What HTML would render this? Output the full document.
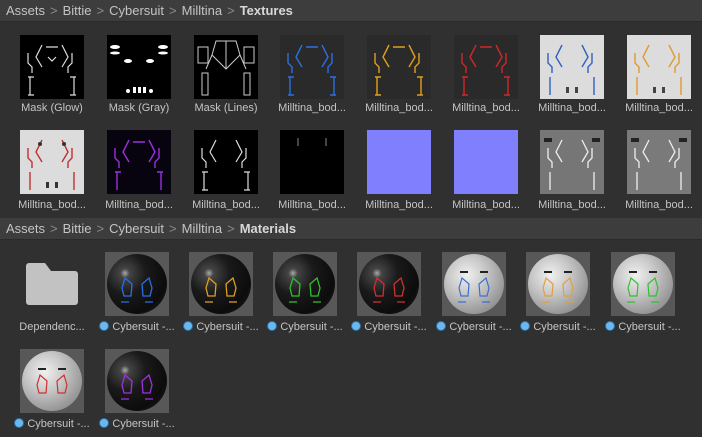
<!DOCTYPE html>
<html><head><style>
body{margin:0;width:702px;height:437px;background:#303030;font-family:"Liberation Sans",sans-serif;overflow:hidden;position:relative}
.hdr{position:absolute;left:0;width:702px;height:22px;background:#3d3d3d;color:#c4c4c4;font-size:13px;line-height:22px;padding-left:6px;box-sizing:border-box;border-bottom:1px solid #2a2a2a}
.hdr b{color:#d8d8d8}
.hdr .s{color:#8a8a8a;margin:0 5px}
.t{position:absolute;width:64px;height:64px}
.t svg{width:64px;height:64px;display:block}
.l{position:absolute;width:90px;text-align:center;font-size:11px;color:#c4c4c4;white-space:nowrap}
.box{position:absolute;width:64px;height:64px;background:#585858}
.sph{position:absolute;left:2px;top:2px;width:60px;height:60px;border-radius:50%}
.sph svg{position:absolute;left:0;top:0;width:60px;height:60px}
.dk{background:radial-gradient(circle at 30% 32%,#aaa 0,#444 8%,#1a1a1a 35%,#0c0c0c 70%,#222 100%)}
.lt{background:radial-gradient(circle at 38% 35%,#f0f0f0 0,#c8c8c8 35%,#9a9a9a 70%,#777 100%)}
.ic{display:inline-block;width:8px;height:8px;border-radius:50%;background:#6ab8ee;border:1px solid #2c6fa6;vertical-align:-1px;margin-right:3px}
.ml{position:absolute;width:84px;text-align:center;font-size:11px;color:#c4c4c4;white-space:nowrap}
</style></head><body>
<div class="hdr" style="top:0">Assets<span class="s">&gt;</span>Bittie<span class="s">&gt;</span>Cybersuit<span class="s">&gt;</span>Milltina<span class="s">&gt;</span><b>Textures</b></div>
<div class="hdr" style="top:218px">Assets<span class="s">&gt;</span>Bittie<span class="s">&gt;</span>Cybersuit<span class="s">&gt;</span>Milltina<span class="s">&gt;</span><b>Materials</b></div>

<div class="t" style="left:20px;top:35px"><svg viewBox="0 0 64 64"><rect width="64" height="64" fill="#000"/><g stroke="#ddd" stroke-width="1.2" fill="none"><path d="M8 18v10l4 4v6M52 18v10l-4 4v6M22 10l-6 12 6 10M42 10l6 12-6 10M26 12h12M28 22l4 4 4-4M10 42v18M54 42v18M8 42h6M50 42h6M8 60h6M50 60h6"/></g></svg></div>
<div class="t" style="left:107px;top:35px"><svg viewBox="0 0 64 64"><rect width="64" height="64" fill="#000"/><g fill="#fff"><ellipse cx="8" cy="12" rx="5" ry="2"/><ellipse cx="56" cy="12" rx="5" ry="2"/><ellipse cx="8" cy="18" rx="5" ry="1.5"/><ellipse cx="56" cy="18" rx="5" ry="1.5"/><ellipse cx="21" cy="26" rx="4" ry="2"/><ellipse cx="43" cy="26" rx="4" ry="2"/><rect x="26" y="52" width="3" height="6"/><rect x="31" y="52" width="3" height="6"/><rect x="36" y="52" width="3" height="6"/><circle cx="21" cy="56" r="2"/><circle cx="44" cy="56" r="2"/></g></svg></div>
<div class="t" style="left:194px;top:35px"><svg viewBox="0 0 64 64"><rect width="64" height="64" fill="#000"/><g stroke="#ccc" stroke-width="1" fill="none"><path d="M4 12h10v16H4zM50 12h10v16H50zM22 6l-4 14 14 14 14-14-4-14zM32 6v28M18 20l-6 14M46 20l6 14M8 38v22h6V38zM50 38v22h6V38z"/></g></svg></div>
<div class="t" style="left:280px;top:35px"><svg viewBox="0 0 64 64"><rect width="64" height="64" fill="#2a2a2a"/><g stroke="#2c6ee0" stroke-width="1.4" fill="none"><path d="M8 18v10l4 4v6M52 18v10l-4 4v6M22 10l-6 12 6 10M42 10l6 12-6 10M26 12h12M10 42v18M54 42v18M8 42h6M50 42h6M8 60h6M50 60h6"/></g></svg></div>
<div class="t" style="left:367px;top:35px"><svg viewBox="0 0 64 64"><rect width="64" height="64" fill="#2a2a2a"/><g stroke="#e0a020" stroke-width="1.4" fill="none"><path d="M8 18v10l4 4v6M52 18v10l-4 4v6M22 10l-6 12 6 10M42 10l6 12-6 10M26 12h12M10 42v18M54 42v18M8 42h6M50 42h6M8 60h6M50 60h6"/></g></svg></div>
<div class="t" style="left:454px;top:35px"><svg viewBox="0 0 64 64"><rect width="64" height="64" fill="#2a2a2a"/><g stroke="#d02828" stroke-width="1.4" fill="none"><path d="M8 18v10l4 4v6M52 18v10l-4 4v6M22 10l-6 12 6 10M42 10l6 12-6 10M26 12h12M10 42v18M54 42v18M8 42h6M50 42h6M8 60h6M50 60h6"/></g></svg></div>
<div class="t" style="left:540px;top:35px"><svg viewBox="0 0 64 64"><rect width="64" height="64" fill="#dcdcdc"/><g stroke="#3060c0" stroke-width="1.4" fill="none"><path d="M8 18v10l4 4v6M52 18v10l-4 4v6M22 10l-6 12 6 10M42 10l6 12-6 10M10 42v18M54 42v18"/></g><g fill="#444"><rect x="26" y="52" width="3" height="6"/><rect x="35" y="52" width="3" height="6"/></g></svg></div>
<div class="t" style="left:627px;top:35px"><svg viewBox="0 0 64 64"><rect width="64" height="64" fill="#dcdcdc"/><g stroke="#e09a30" stroke-width="1.4" fill="none"><path d="M8 18v10l4 4v6M52 18v10l-4 4v6M22 10l-6 12 6 10M42 10l6 12-6 10M10 42v18M54 42v18"/></g><g fill="#444"><rect x="26" y="52" width="3" height="6"/><rect x="35" y="52" width="3" height="6"/></g></svg></div>
<div class="l" style="left:7px;top:102px">Mask (Glow)</div>
<div class="l" style="left:94px;top:102px">Mask (Gray)</div>
<div class="l" style="left:181px;top:102px">Mask (Lines)</div>
<div class="l" style="left:267px;top:102px">Milltina_bod...</div>
<div class="l" style="left:354px;top:102px">Milltina_bod...</div>
<div class="l" style="left:441px;top:102px">Milltina_bod...</div>
<div class="l" style="left:527px;top:102px">Milltina_bod...</div>
<div class="l" style="left:614px;top:102px">Milltina_bod...</div>

<div class="t" style="left:20px;top:130px"><svg viewBox="0 0 64 64"><rect width="64" height="64" fill="#dcdcdc"/><g stroke="#c03030" stroke-width="1.4" fill="none"><path d="M8 18v10l4 4v6M52 18v10l-4 4v6M22 10l-6 12 6 10M42 10l6 12-6 10M10 42v18M54 42v18"/></g><g fill="#333"><rect x="26" y="52" width="3" height="6"/><rect x="35" y="52" width="3" height="6"/><circle cx="20" cy="14" r="2"/><circle cx="44" cy="14" r="2"/></g></svg></div>
<div class="t" style="left:107px;top:130px"><svg viewBox="0 0 64 64"><rect width="64" height="64" fill="#08040f"/><g stroke="#9a30e0" stroke-width="1.4" fill="none"><path d="M8 18v10l4 4v6M52 18v10l-4 4v6M22 10l-6 12 6 10M42 10l6 12-6 10M26 12h12M10 42v18M54 42v18M8 42h6M50 42h6"/></g></svg></div>
<div class="t" style="left:194px;top:130px"><svg viewBox="0 0 64 64"><rect width="64" height="64" fill="#000"/><g stroke="#ddd" stroke-width="1.2" fill="none"><path d="M8 18v10l4 4v6M52 18v10l-4 4v6M22 10l-6 12 6 10M42 10l6 12-6 10M10 42v18M54 42v18M8 42h6M50 42h6M8 60h6M50 60h6"/></g></svg></div>
<div class="t" style="left:280px;top:130px"><svg viewBox="0 0 64 64"><rect width="64" height="64" fill="#000"/><path d="M18 8v8M46 8v8" stroke="#888" stroke-width="1"/></svg></div>
<div class="t" style="left:367px;top:130px;background:#8080fe"></div>
<div class="t" style="left:454px;top:130px;background:#8080fe"></div>
<div class="t" style="left:540px;top:130px"><svg viewBox="0 0 64 64"><rect width="64" height="64" fill="#767676"/><g stroke="#eee" stroke-width="1.3" fill="none"><path d="M8 18v10l4 4v6M52 18v10l-4 4v6M22 10l-6 12 6 10M42 10l6 12-6 10M10 42v18M54 42v18"/></g><g fill="#222"><rect x="4" y="8" width="8" height="4"/><rect x="52" y="8" width="8" height="4"/></g></svg></div>
<div class="t" style="left:627px;top:130px"><svg viewBox="0 0 64 64"><rect width="64" height="64" fill="#7a7a7a"/><g stroke="#eee" stroke-width="1.3" fill="none"><path d="M8 18v10l4 4v6M52 18v10l-4 4v6M22 10l-6 12 6 10M42 10l6 12-6 10M10 42v18M54 42v18"/></g><g fill="#222"><rect x="4" y="8" width="8" height="4"/><rect x="52" y="8" width="8" height="4"/></g></svg></div>
<div class="l" style="left:7px;top:199px">Milltina_bod...</div>
<div class="l" style="left:94px;top:199px">Milltina_bod...</div>
<div class="l" style="left:181px;top:199px">Milltina_bod...</div>
<div class="l" style="left:267px;top:199px">Milltina_bod...</div>
<div class="l" style="left:354px;top:199px">Milltina_bod...</div>
<div class="l" style="left:441px;top:199px">Milltina_bod...</div>
<div class="l" style="left:527px;top:199px">Milltina_bod...</div>
<div class="l" style="left:614px;top:199px">Milltina_bod...</div>

<svg style="position:absolute;left:26px;top:263px" width="52" height="42" viewBox="0 0 52 42"><path d="M3 0h16l6 8h24a3 3 0 0 1 3 3v28a3 3 0 0 1-3 3H3a3 3 0 0 1-3-3V3a3 3 0 0 1 3-3z" fill="#c2c2c2"/></svg>
<div class="ml" style="left:10px;top:321px">Dependenc...</div>

<div class="box" style="left:105px;top:252px"><div class="sph dk"><svg viewBox="0 0 60 60" fill="none" stroke="#2a6ee8" stroke-width="1.3"><path d="M18 24l-3 10 2 8h7l1-12zM42 24l3 10-2 8h-7l-1-12zM14 48h8M38 48h8"/></svg></div></div>
<div class="box" style="left:189px;top:252px"><div class="sph dk"><svg viewBox="0 0 60 60" fill="none" stroke="#e0a020" stroke-width="1.3"><path d="M18 24l-3 10 2 8h7l1-12zM42 24l3 10-2 8h-7l-1-12zM14 48h8M38 48h8"/></svg></div></div>
<div class="box" style="left:273px;top:252px"><div class="sph dk"><svg viewBox="0 0 60 60" fill="none" stroke="#30c030" stroke-width="1.3"><path d="M18 24l-3 10 2 8h7l1-12zM42 24l3 10-2 8h-7l-1-12zM14 48h8M38 48h8"/></svg></div></div>
<div class="box" style="left:357px;top:252px"><div class="sph dk"><svg viewBox="0 0 60 60" fill="none" stroke="#d03030" stroke-width="1.3"><path d="M18 24l-3 10 2 8h7l1-12zM42 24l3 10-2 8h-7l-1-12zM14 48h8M38 48h8"/></svg></div></div>
<div class="box" style="left:442px;top:252px"><div class="sph lt"><svg viewBox="0 0 60 60" fill="none" stroke="#3a70d0" stroke-width="1.2"><path d="M18 24l-3 10 2 8h7l1-12zM42 24l3 10-2 8h-7l-1-12zM14 48h8M38 48h8"/><path d="M16 18h8M36 18h8" stroke="#222" stroke-width="2"/></svg></div></div>
<div class="box" style="left:526px;top:252px"><div class="sph lt"><svg viewBox="0 0 60 60" fill="none" stroke="#e0a040" stroke-width="1.2"><path d="M18 24l-3 10 2 8h7l1-12zM42 24l3 10-2 8h-7l-1-12zM14 48h8M38 48h8"/><path d="M16 18h8M36 18h8" stroke="#222" stroke-width="2"/></svg></div></div>
<div class="box" style="left:611px;top:252px"><div class="sph lt"><svg viewBox="0 0 60 60" fill="none" stroke="#30c030" stroke-width="1.2"><path d="M18 24l-3 10 2 8h7l1-12zM42 24l3 10-2 8h-7l-1-12zM14 48h8M38 48h8"/><path d="M16 18h8M36 18h8" stroke="#222" stroke-width="2"/></svg></div></div>
<div class="ml" style="left:95px;top:321px"><span class="ic"></span>Cybersuit -...</div>
<div class="ml" style="left:179px;top:321px"><span class="ic"></span>Cybersuit -...</div>
<div class="ml" style="left:263px;top:321px"><span class="ic"></span>Cybersuit -...</div>
<div class="ml" style="left:347px;top:321px"><span class="ic"></span>Cybersuit -...</div>
<div class="ml" style="left:432px;top:321px"><span class="ic"></span>Cybersuit -...</div>
<div class="ml" style="left:516px;top:321px"><span class="ic"></span>Cybersuit -...</div>
<div class="ml" style="left:601px;top:321px"><span class="ic"></span>Cybersuit -...</div>

<div class="box" style="left:20px;top:349px"><div class="sph lt"><svg viewBox="0 0 60 60" fill="none" stroke="#d03030" stroke-width="1.2"><path d="M18 24l-3 10 2 8h7l1-12zM42 24l3 10-2 8h-7l-1-12z"/><path d="M16 18h8M36 18h8" stroke="#222" stroke-width="2"/></svg></div></div>
<div class="box" style="left:105px;top:349px"><div class="sph dk"><svg viewBox="0 0 60 60" fill="none" stroke="#a030e0" stroke-width="1.3"><path d="M18 24l-3 10 2 8h7l1-12zM42 24l3 10-2 8h-7l-1-12zM14 48h8M38 48h8"/></svg></div></div>
<div class="ml" style="left:10px;top:418px"><span class="ic"></span>Cybersuit -...</div>
<div class="ml" style="left:95px;top:418px"><span class="ic"></span>Cybersuit -...</div>
</body></html>
